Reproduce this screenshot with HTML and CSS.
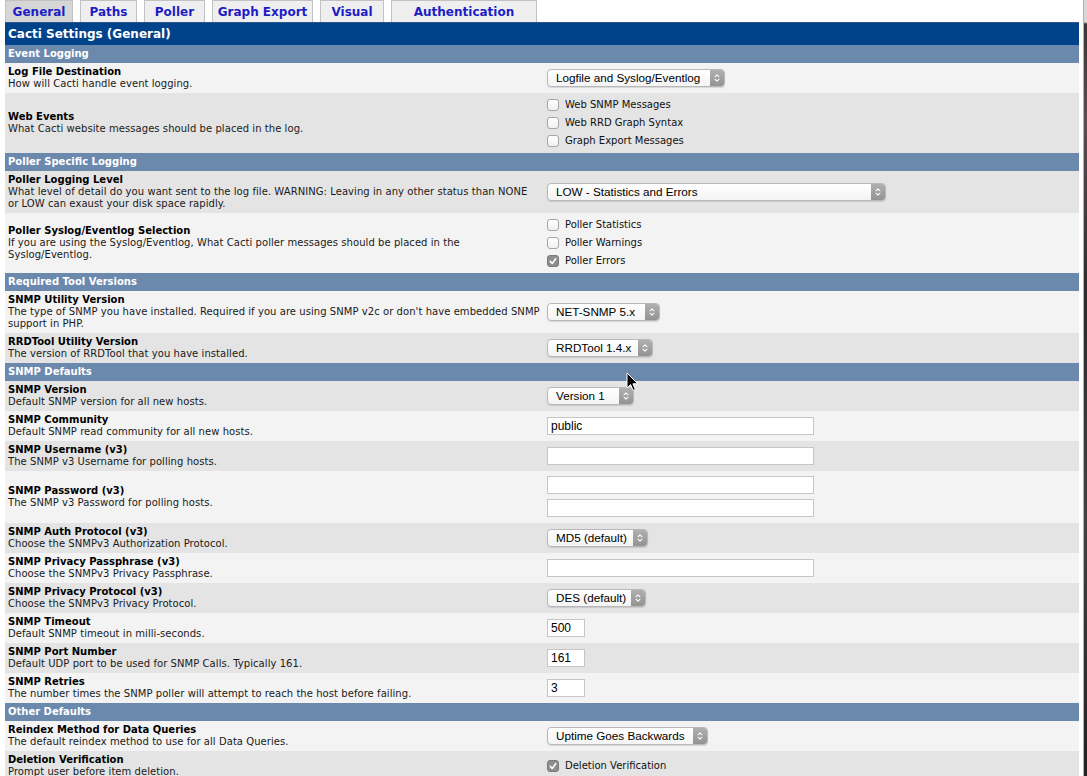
FILE: index.html
```html
<!DOCTYPE html>
<html>
<head>
<meta charset="utf-8">
<title>Cacti Settings (General)</title>
<link rel="stylesheet" href="styles.css">
</head>
<body>
<div class="screen">
  <div class="page">
    <nav class="tabs">
      <a class="tab tab-general is-active">General</a>
      <a class="tab tab-paths">Paths</a>
      <a class="tab tab-poller">Poller</a>
      <a class="tab tab-export">Graph Export</a>
      <a class="tab tab-visual">Visual</a>
      <a class="tab tab-auth">Authentication</a>
    </nav>
    <table class="settings">
      <colgroup><col class="col-label"><col class="col-field"></colgroup>
      <tr class="title"><td colspan="2">Cacti Settings (General)</td></tr>

      <tr class="section"><td colspan="2">Event Logging</td></tr>
      <tr class="row light">
        <td class="label"><div class="name">Log File Destination</div><div class="desc">How will Cacti handle event logging.</div></td>
        <td class="field"><div class="select w-logfile"><span class="val">Logfile and Syslog/Eventlog</span><span class="arrow"><svg viewBox="0 0 10 14" width="8" height="12"><path d="M2.5 5.5 L5 3 L7.5 5.5 M2.5 8.5 L5 11 L7.5 8.5"/></svg></span></div></td>
      </tr>
      <tr class="row dark">
        <td class="label"><div class="name">Web Events</div><div class="desc">What Cacti website messages should be placed in the log.</div></td>
        <td class="field">
          <label class="check"><span class="box"></span>Web SNMP Messages</label>
          <label class="check"><span class="box"></span>Web RRD Graph Syntax</label>
          <label class="check"><span class="box"></span>Graph Export Messages</label>
        </td>
      </tr>

      <tr class="section"><td colspan="2">Poller Specific Logging</td></tr>
      <tr class="row dark">
        <td class="label"><div class="name">Poller Logging Level</div><div class="desc">What level of detail do you want sent to the log file. WARNING: Leaving in any other status than NONE<br>or LOW can exaust your disk space rapidly.</div></td>
        <td class="field"><div class="select w-level"><span class="val">LOW - Statistics and Errors</span><span class="arrow"><svg viewBox="0 0 10 14" width="8" height="12"><path d="M2.5 5.5 L5 3 L7.5 5.5 M2.5 8.5 L5 11 L7.5 8.5"/></svg></span></div></td>
      </tr>
      <tr class="row light">
        <td class="label"><div class="name">Poller Syslog/Eventlog Selection</div><div class="desc">If you are using the Syslog/Eventlog, What Cacti poller messages should be placed in the<br>Syslog/Eventlog.</div></td>
        <td class="field">
          <label class="check"><span class="box"></span>Poller Statistics</label>
          <label class="check"><span class="box"></span>Poller Warnings</label>
          <label class="check"><span class="box is-checked"><svg viewBox="0 0 12 12" width="12" height="12"><path d="M3.2 6.3 L5.2 8.5 L8.8 3.6"/></svg></span>Poller Errors</label>
        </td>
      </tr>

      <tr class="section"><td colspan="2">Required Tool Versions</td></tr>
      <tr class="row light">
        <td class="label"><div class="name">SNMP Utility Version</div><div class="desc">The type of SNMP you have installed. Required if you are using SNMP v2c or don't have embedded SNMP<br>support in PHP.</div></td>
        <td class="field"><div class="select w-netsnmp"><span class="val">NET-SNMP 5.x</span><span class="arrow"><svg viewBox="0 0 10 14" width="8" height="12"><path d="M2.5 5.5 L5 3 L7.5 5.5 M2.5 8.5 L5 11 L7.5 8.5"/></svg></span></div></td>
      </tr>
      <tr class="row dark">
        <td class="label"><div class="name">RRDTool Utility Version</div><div class="desc">The version of RRDTool that you have installed.</div></td>
        <td class="field"><div class="select w-rrd"><span class="val">RRDTool 1.4.x</span><span class="arrow"><svg viewBox="0 0 10 14" width="8" height="12"><path d="M2.5 5.5 L5 3 L7.5 5.5 M2.5 8.5 L5 11 L7.5 8.5"/></svg></span></div></td>
      </tr>

      <tr class="section"><td colspan="2">SNMP Defaults</td></tr>
      <tr class="row dark">
        <td class="label"><div class="name">SNMP Version</div><div class="desc">Default SNMP version for all new hosts.</div></td>
        <td class="field"><div class="select w-version"><span class="val">Version 1</span><span class="arrow"><svg viewBox="0 0 10 14" width="8" height="12"><path d="M2.5 5.5 L5 3 L7.5 5.5 M2.5 8.5 L5 11 L7.5 8.5"/></svg></span></div></td>
      </tr>
      <tr class="row light">
        <td class="label"><div class="name">SNMP Community</div><div class="desc">Default SNMP read community for all new hosts.</div></td>
        <td class="field"><input class="text" type="text" value="public"></td>
      </tr>
      <tr class="row dark">
        <td class="label"><div class="name">SNMP Username (v3)</div><div class="desc">The SNMP v3 Username for polling hosts.</div></td>
        <td class="field"><input class="text" type="text" value=""></td>
      </tr>
      <tr class="row light">
        <td class="label"><div class="name">SNMP Password (v3)</div><div class="desc">The SNMP v3 Password for polling hosts.</div></td>
        <td class="field"><div class="stack"><input class="text" type="password" value=""><input class="text" type="password" value=""></div></td>
      </tr>
      <tr class="row dark">
        <td class="label"><div class="name">SNMP Auth Protocol (v3)</div><div class="desc">Choose the SNMPv3 Authorization Protocol.</div></td>
        <td class="field"><div class="select w-md5"><span class="val">MD5 (default)</span><span class="arrow"><svg viewBox="0 0 10 14" width="8" height="12"><path d="M2.5 5.5 L5 3 L7.5 5.5 M2.5 8.5 L5 11 L7.5 8.5"/></svg></span></div></td>
      </tr>
      <tr class="row light">
        <td class="label"><div class="name">SNMP Privacy Passphrase (v3)</div><div class="desc">Choose the SNMPv3 Privacy Passphrase.</div></td>
        <td class="field"><input class="text" type="text" value=""></td>
      </tr>
      <tr class="row dark">
        <td class="label"><div class="name">SNMP Privacy Protocol (v3)</div><div class="desc">Choose the SNMPv3 Privacy Protocol.</div></td>
        <td class="field"><div class="select w-des"><span class="val">DES (default)</span><span class="arrow"><svg viewBox="0 0 10 14" width="8" height="12"><path d="M2.5 5.5 L5 3 L7.5 5.5 M2.5 8.5 L5 11 L7.5 8.5"/></svg></span></div></td>
      </tr>
      <tr class="row light">
        <td class="label"><div class="name">SNMP Timeout</div><div class="desc">Default SNMP timeout in milli-seconds.</div></td>
        <td class="field"><input class="text short" type="text" value="500"></td>
      </tr>
      <tr class="row dark">
        <td class="label"><div class="name">SNMP Port Number</div><div class="desc">Default UDP port to be used for SNMP Calls. Typically 161.</div></td>
        <td class="field"><input class="text short" type="text" value="161"></td>
      </tr>
      <tr class="row light">
        <td class="label"><div class="name">SNMP Retries</div><div class="desc">The number times the SNMP poller will attempt to reach the host before failing.</div></td>
        <td class="field"><input class="text short" type="text" value="3"></td>
      </tr>

      <tr class="section"><td colspan="2">Other Defaults</td></tr>
      <tr class="row light">
        <td class="label"><div class="name">Reindex Method for Data Queries</div><div class="desc">The default reindex method to use for all Data Queries.</div></td>
        <td class="field"><div class="select w-uptime"><span class="val">Uptime Goes Backwards</span><span class="arrow"><svg viewBox="0 0 10 14" width="8" height="12"><path d="M2.5 5.5 L5 3 L7.5 5.5 M2.5 8.5 L5 11 L7.5 8.5"/></svg></span></div></td>
      </tr>
      <tr class="row dark">
        <td class="label"><div class="name">Deletion Verification</div><div class="desc">Prompt user before item deletion.</div></td>
        <td class="field"><label class="check"><span class="box is-checked"><svg viewBox="0 0 12 12" width="12" height="12"><path d="M3.2 6.3 L5.2 8.5 L8.8 3.6"/></svg></span>Deletion Verification</label></td>
      </tr>
    </table>
    <svg class="cursor" viewBox="0 0 13 20" width="13" height="20"><path d="M1 1 L1 16 L4.6 12.6 L7.2 18.4 L9.4 17.4 L6.9 11.8 L11.8 11.8 Z"/></svg>
  </div>
  <div class="edge"></div>
</div>
</body>
</html>
```

FILE: styles.css
```css
html, body {
  margin: 0;
  padding: 0;
  height: 776px;
  overflow: hidden;
  background: #fff;
}

.screen {
  display: flex;
  height: 776px;
}

.page {
  flex: 1;
  position: relative;
  padding: 0 4px 0 5px;
  font-family: "DejaVu Sans", Verdana, sans-serif;
  font-size: 10px;
  color: #000;
}

.edge {
  width: 3px;
  border-left: 1px solid #b0b0b0;
  background: linear-gradient(#d8d8d8 0, #d8d8d8 22px, #3a3636 24px, #5a4e52 120px, #2c2a2c 300px, #454045 520px, #222 776px);
}

/* Tabs */
.tabs {
  display: flex;
  gap: 7px;
  height: 22px;
}

.tab {
  box-sizing: border-box;
  height: 22px;
  border: 1px solid #c2c2c2;
  border-bottom: none;
  background: #efefef;
  color: #1d1dc6;
  font-weight: bold;
  font-size: 12px;
  line-height: 22px;
  text-align: center;
  cursor: pointer;
}

.tab.is-active { background: #d6d6d6; }

.tab-general { width: 68px; }
.tab-paths { width: 57px; }
.tab-poller { width: 61px; }
.tab-export { width: 101px; }
.tab-visual { width: 64px; }
.tab-auth { width: 146px; }

/* Table */
.settings {
  width: 100%;
  border-collapse: collapse;
  table-layout: fixed;
}

.col-label { width: 541px; }

.settings td {
  padding: 0;
}

.title td {
  height: 22px;
  box-sizing: border-box;
  background: #00438a;
  border-top: 1px solid #2c5684;
  color: #fff;
  font-weight: bold;
  font-size: 12px;
  padding: 0 3px;
}

.section td {
  height: 18px;
  box-sizing: border-box;
  background: #6b88ad;
  color: #fff;
  font-weight: bold;
  padding: 0 0 0 3px;
  line-height: 18px;
}

.row.light td { background: #f3f3f3; }
.row.dark td { background: #e4e4e4; }

.row td {
  vertical-align: middle;
  line-height: 12px;
}

.row td.label { padding: 3px 0 3px 3px; }
.row td.field { padding: 3px 1px; }

.name { font-weight: bold; }
.desc { color: #1a1a1a; letter-spacing: 0.06px; }

/* Select */
.select {
  display: flex;
  align-items: center;
  box-sizing: border-box;
  height: 18px;
  border: 1px solid #b8b8b8;
  border-radius: 4px;
  background: linear-gradient(#ffffff, #f4f4f4);
  box-shadow: 0 1px 1px rgba(0, 0, 0, 0.12);
  overflow: hidden;
  font-family: "Liberation Sans", Arial, sans-serif;
  font-size: 11.7px;
  line-height: 16px;
  color: #000;
}

.select .val {
  flex: 1;
  padding-left: 8px;
  white-space: nowrap;
}

.select .arrow {
  width: 14px;
  align-self: stretch;
  background: linear-gradient(#b0b0b0, #939393);
  display: flex;
  align-items: center;
  justify-content: center;
}

.select .arrow svg path {
  fill: none;
  stroke: #fff;
  stroke-width: 1.3;
  stroke-linecap: round;
  stroke-linejoin: round;
}

.w-logfile { width: 178px; }
.w-level { width: 339px; }
.w-netsnmp { width: 113px; }
.w-rrd { width: 106px; }
.w-version { width: 87px; }
.w-md5 { width: 101px; }
.w-des { width: 99px; }
.w-uptime { width: 161px; }

/* Text inputs */
.text {
  display: block;
  box-sizing: border-box;
  width: 267px;
  height: 18px;
  margin: 0;
  padding: 0 3px;
  border: 1px solid #c6c6c6;
  background: #fff;
  font-family: "Liberation Sans", Arial, sans-serif;
  font-size: 12px;
  color: #000;
  outline: none;
}

.stack {
  display: flex;
  flex-direction: column;
  gap: 5px;
  padding: 2px 0 3px;
}

.text.short { width: 38px; }

/* Checkboxes */
.check {
  display: flex;
  align-items: center;
  height: 18px;
  gap: 6px;
  font-size: 10px;
  color: #111;
}

.box {
  box-sizing: border-box;
  width: 12px;
  height: 12px;
  border: 1px solid #a6a6a6;
  border-radius: 3px;
  background: linear-gradient(#ffffff, #f0f0f0);
  display: flex;
  align-items: center;
  justify-content: center;
}

.box.is-checked {
  background: #8e8e8e;
  border-color: #7a7a7a;
}

.box svg { flex: none; }

.box svg path {
  fill: none;
  stroke: #fff;
  stroke-width: 1.6;
  stroke-linecap: round;
  stroke-linejoin: round;
}

/* Mouse pointer overlay */
.cursor {
  position: absolute;
  left: 626px;
  top: 372px;
}

.cursor path {
  fill: #000;
  stroke: #fff;
  stroke-width: 1;
  stroke-linejoin: round;
}
```
